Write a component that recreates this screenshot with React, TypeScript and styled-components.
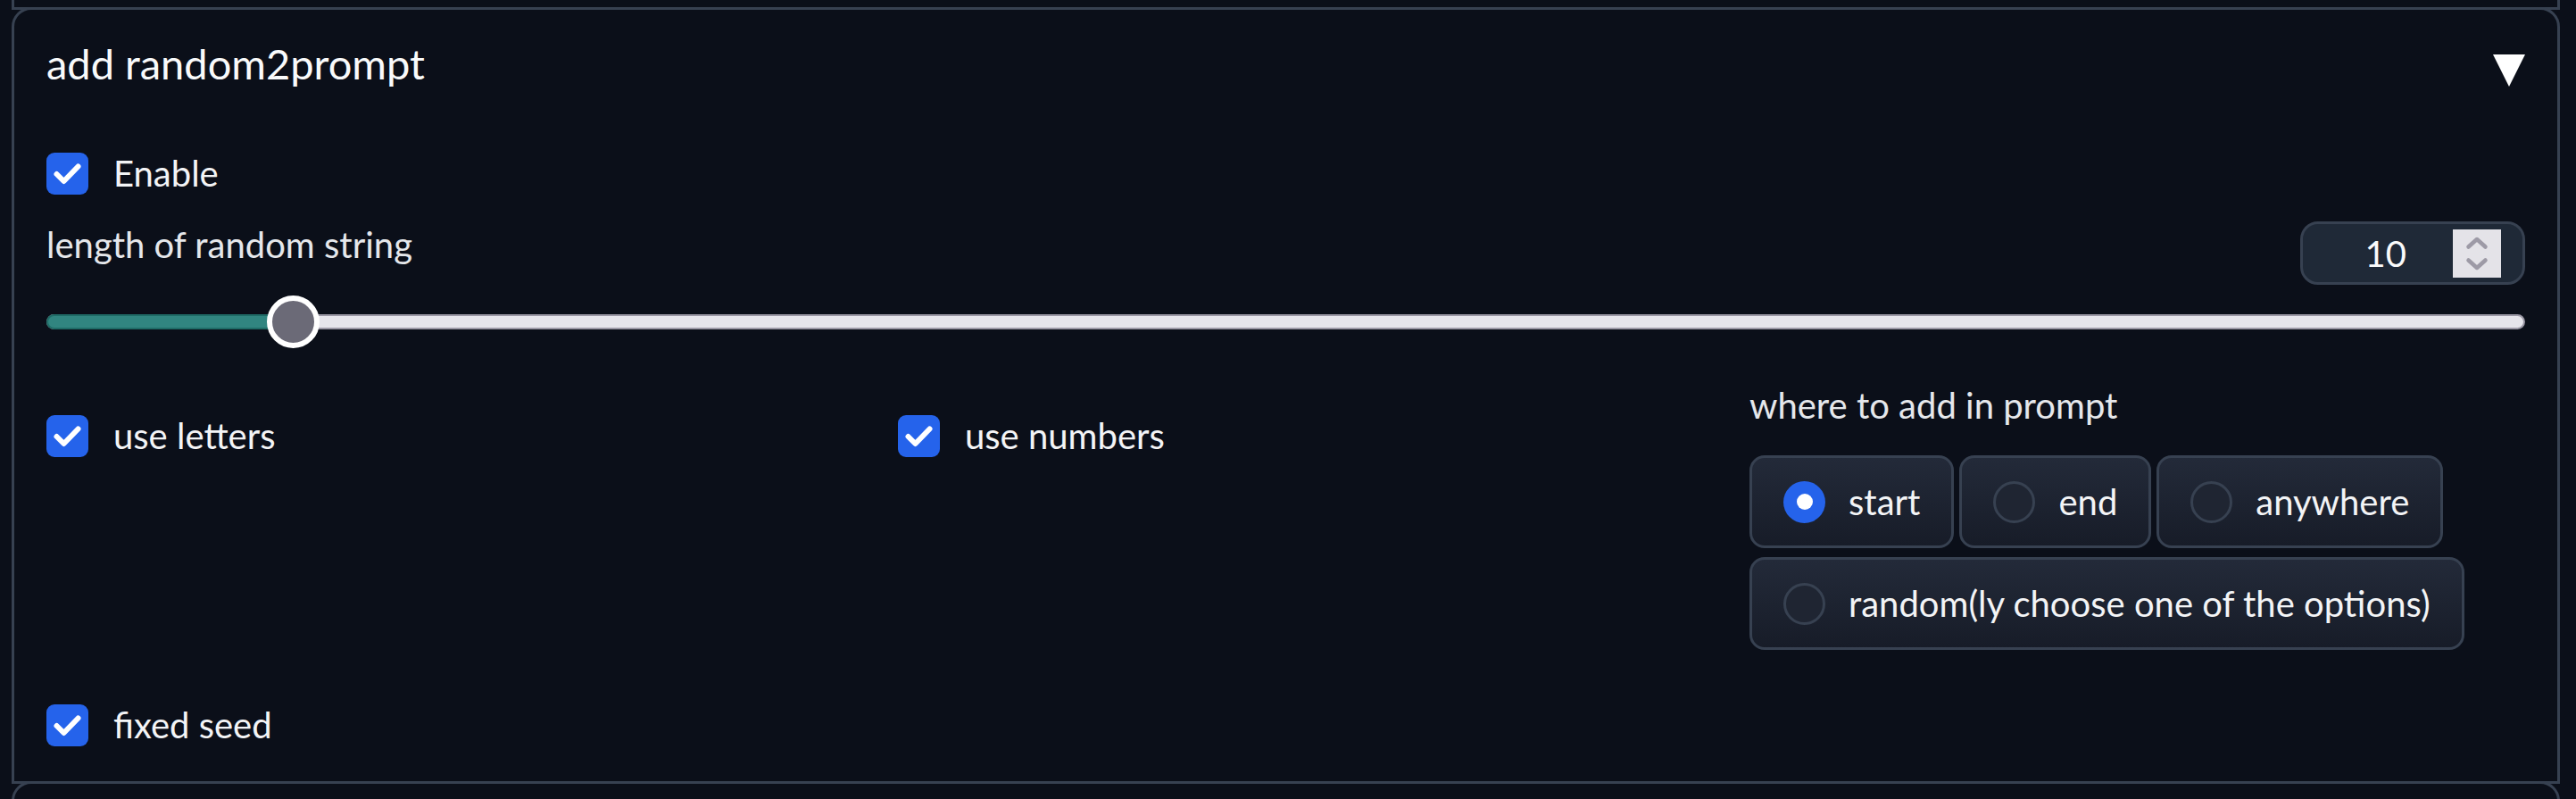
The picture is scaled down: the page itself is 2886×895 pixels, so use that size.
import styled, { createGlobalStyle } from "styled-components"

const GlobalStyle = createGlobalStyle`
  html, body {
    margin: 0;
    padding: 0;
    background: #0b0f19;
    overflow: hidden;
  }
  body {
    font-family: Lato, "Liberation Sans", sans-serif;
    color: #f3f4f6;
  }
`

const border = "#374151"

const Page = styled.div`
  padding: 0 18px 0 13px;
  box-sizing: border-box;
  width: 2886px;
  height: 895px;
  overflow: hidden;
`

const PrevBlock = styled.div`
  height: 11px;
  box-sizing: border-box;
  border: 3px solid ${border};
  border-top: none;
`

const Panel = styled.div`
  position: relative;
  margin-top: -3px;
  border: 3px solid ${border};
  border-radius: 22px 22px 0 0;
  background: #0b0f19;
  padding: 30px 36px 39px;
  display: flex;
  flex-direction: column;
`

const NextBlock = styled.div`
  position: relative;
  margin-top: -3px;
  height: 80px;
  border: 3px solid ${border};
  border-radius: 22px 22px 0 0;
  background: #0b0f19;
`

const TitleRow = styled.div`
  display: flex;
  justify-content: space-between;
  align-items: flex-start;
  height: 60px;
`

const Title = styled.span`
  font-size: 47px;
  line-height: 60px;
  color: #f9fafb;
`

const Caret = styled.svg`
  margin-top: 20px;
  width: 36px;
  height: 36px;
`

const CheckRow = styled.label<{ $top: number }>`
  display: flex;
  align-items: center;
  gap: 28px;
  height: 47px;
  margin-top: ${(p) => p.$top}px;
`

const Box = styled.span`
  width: 47px;
  height: 47px;
  border-radius: 9px;
  background: #2563eb;
  display: flex;
  align-items: center;
  justify-content: center;
  flex: none;
`

const Text = styled.span`
  font-size: 40px;
  line-height: 47px;
  color: #f3f4f6;
  white-space: nowrap;
`

const BlockLabel = styled.span<{ $top?: number }>`
  font-size: 40px;
  line-height: 47px;
  color: #e5e7eb;
  margin-top: ${(p) => p.$top ?? 0}px;
`

const SliderHeader = styled.div`
  display: flex;
  justify-content: space-between;
  align-items: flex-start;
  margin-top: 30px;
`

const NumberBox = styled.div`
  width: 252px;
  height: 71px;
  box-sizing: border-box;
  border: 3px solid ${border};
  border-radius: 20px;
  background: #1f2937;
  display: flex;
  align-items: center;
  justify-content: flex-end;
  padding-right: 24px;
  font-size: 40px;
  color: #f9fafb;
`

const NumberValue = styled.span`
  margin-right: 52px;
`

const Spinner = styled.div`
  width: 54px;
  height: 54px;
  background: #e4e3e8;
  display: flex;
  align-items: center;
  justify-content: center;
`

const SliderWrap = styled.div`
  position: relative;
  height: 59px;
  margin-top: 12px;
  display: flex;
  align-items: center;
`

const Rail = styled.div`
  position: relative;
  flex: 1;
  height: 17px;
  box-sizing: border-box;
  border: 2px solid #9b98a5;
  border-radius: 9px;
  background: #e6e5eb;
`

const Fill = styled.div`
  position: absolute;
  left: -2px;
  top: -2px;
  bottom: -2px;
  box-sizing: border-box;
  border: 2px solid #1f6b66;
  border-radius: 9px 0 0 9px;
  background: #318580;
`

const Thumb = styled.div`
  position: absolute;
  top: 0;
  width: 59px;
  height: 59px;
  box-sizing: border-box;
  margin-left: -29.5px;
  border: 6px solid #ffffff;
  border-radius: 50%;
  background: #6b6a77;
`

const Columns = styled.div`
  display: grid;
  grid-template-columns: repeat(3, 1fr);
  column-gap: 85px;
  margin-top: 41px;
  align-items: start;
`

const Column = styled.div`
  display: flex;
  flex-direction: column;
`

const RadioGroup = styled.div`
  display: flex;
  flex-wrap: wrap;
  gap: 10px 6px;
  margin-top: 32px;
`

const RadioOption = styled.label`
  display: flex;
  align-items: center;
  gap: 26px;
  padding: 25.5px 35px;
  border: 3px solid ${border};
  border-radius: 17px;
  background: linear-gradient(to bottom, #232a39, #171c28);
`

const RadioDot = styled.span<{ $on: boolean }>`
  width: 47px;
  height: 47px;
  box-sizing: border-box;
  border-radius: 50%;
  flex: none;
  display: flex;
  align-items: center;
  justify-content: center;
  background: ${(p) => (p.$on ? "#2563eb" : "#1f2532")};
  border: ${(p) => (p.$on ? "none" : `3px solid ${border}`)};

  &::after {
    content: "";
    display: ${(p) => (p.$on ? "block" : "none")};
    width: 18px;
    height: 18px;
    border-radius: 50%;
    background: #ffffff;
  }
`

function Check({ label, top }: { label: string; top: number }) {
  return (
    <CheckRow $top={top}>
      <Box>
        <svg width="47" height="47" viewBox="0 0 47 47">
          <polyline
            points="11.5,24 19.5,32 35.5,15.5"
            fill="none"
            stroke="#ffffff"
            strokeWidth="6"
            strokeLinecap="round"
            strokeLinejoin="round"
          />
        </svg>
      </Box>
      <Text>{label}</Text>
    </CheckRow>
  )
}

const options = ["start", "end", "anywhere", "random(ly choose one of the options)"]

export default function App() {
  const min = 1
  const max = 100
  const value = 10
  const ratio = (value - min) / (max - min)
  const thumbLeft = `calc(${ratio} * (100% - 59px) + 29.5px)`

  return (
    <Page>
      <GlobalStyle />
      <PrevBlock />
      <Panel>
        <TitleRow>
          <Title>add random2prompt</Title>
          <Caret viewBox="0 0 36 36">
            <polygon points="0,0 36,0 18,36" fill="#ffffff" />
          </Caret>
        </TitleRow>

        <Check label="Enable" top={70} />

        <SliderHeader>
          <BlockLabel $top={3}>length of random string</BlockLabel>
          <NumberBox>
            <NumberValue>{value}</NumberValue>
            <Spinner>
              <svg width="54" height="54" viewBox="0 0 54 54">
                <polyline
                  points="17.5,19.5 27,11 36.5,19.5"
                  fill="none"
                  stroke="#9d9aa6"
                  strokeWidth="4.5"
                  strokeLinecap="round"
                  strokeLinejoin="round"
                />
                <polyline
                  points="17.5,34.5 27,43 36.5,34.5"
                  fill="none"
                  stroke="#9d9aa6"
                  strokeWidth="4.5"
                  strokeLinecap="round"
                  strokeLinejoin="round"
                />
              </svg>
            </Spinner>
          </NumberBox>
        </SliderHeader>

        <SliderWrap>
          <Rail>
            <Fill style={{ width: `calc(${ratio} * (100% - 59px) + 31.5px)` }} />
          </Rail>
          <Thumb style={{ left: thumbLeft }} />
        </SliderWrap>

        <Columns>
          <Column>
            <Check label="use letters" top={34} />
          </Column>
          <Column>
            <Check label="use numbers" top={34} />
          </Column>
          <Column>
            <BlockLabel>where to add in prompt</BlockLabel>
            <RadioGroup>
              {options.map((o, i) => (
                <RadioOption key={o}>
                  <RadioDot $on={i === 0} />
                  <Text>{o}</Text>
                </RadioOption>
              ))}
            </RadioGroup>
          </Column>
        </Columns>

        <Check label="fixed seed" top={61} />
      </Panel>
      <NextBlock />
    </Page>
  )
}
